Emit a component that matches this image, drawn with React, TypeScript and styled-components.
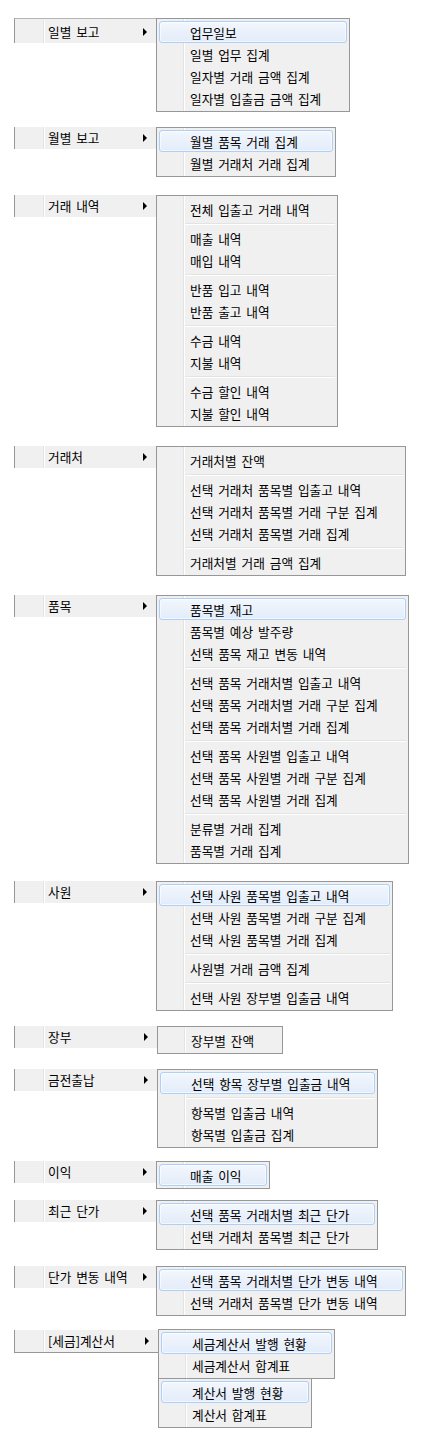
import styled, { createGlobalStyle, css } from "styled-components";

type Entry = string | null;

type Menu = {
  width: number;
  hot?: boolean;
  items: Entry[];
};

type Group = {
  label: string;
  gap: number;
  shift?: number;
  edge?: "top" | "bottom";
  menus: Menu[];
};

const groups: Group[] = [
  {
    label: "일별 보고",
    gap: 18,
    edge: "top",
    menus: [
      {
        width: 194,
        hot: true,
        items: ["업무일보", "일별 업무 집계", "일자별 거래 금액 집계", "일자별 입출금 금액 집계"],
      },
    ],
  },
  {
    label: "월별 보고",
    gap: 15,
    menus: [{ width: 180, hot: true, items: ["월별 품목 거래 집계", "월별 거래처 거래 집계"] }],
  },
  {
    label: "거래 내역",
    gap: 18,
    menus: [
      {
        width: 182,
        items: [
          "전체 입출고 거래 내역",
          null,
          "매출 내역",
          "매입 내역",
          null,
          "반품 입고 내역",
          "반품 출고 내역",
          null,
          "수금 내역",
          "지불 내역",
          null,
          "수금 할인 내역",
          "지불 할인 내역",
        ],
      },
    ],
  },
  {
    label: "거래처",
    gap: 19,
    menus: [
      {
        width: 250,
        items: [
          "거래처별 잔액",
          null,
          "선택 거래처 품목별 입출고 내역",
          "선택 거래처 품목별 거래 구분 집계",
          "선택 거래처 품목별 거래 집계",
          null,
          "거래처별 거래 금액 집계",
        ],
      },
    ],
  },
  {
    label: "품목",
    gap: 19,
    menus: [
      {
        width: 253,
        hot: true,
        items: [
          "품목별 재고",
          "품목별 예상 발주량",
          "선택 품목 재고 변동 내역",
          null,
          "선택 품목 거래처별 입출고 내역",
          "선택 품목 거래처별 거래 구분 집계",
          "선택 품목 거래처별 거래 집계",
          null,
          "선택 품목 사원별 입출고 내역",
          "선택 품목 사원별 거래 구분 집계",
          "선택 품목 사원별 거래 집계",
          null,
          "분류별 거래 집계",
          "품목별 거래 집계",
        ],
      },
    ],
  },
  {
    label: "사원",
    gap: 17,
    menus: [
      {
        width: 237,
        hot: true,
        items: [
          "선택 사원 품목별 입출고 내역",
          "선택 사원 품목별 거래 구분 집계",
          "선택 사원 품목별 거래 집계",
          null,
          "사원별 거래 금액 집계",
          null,
          "선택 사원 장부별 입출금 내역",
        ],
      },
    ],
  },
  {
    label: "장부",
    gap: 15,
    shift: 1,
    menus: [{ width: 126, items: ["장부별 잔액"] }],
  },
  {
    label: "금전출납",
    gap: 15,
    shift: 1,
    menus: [
      {
        width: 221,
        hot: true,
        items: ["선택 항목 장부별 입출금 내역", null, "항목별 입출금 내역", "항목별 입출금 집계"],
      },
    ],
  },
  {
    label: "이익",
    gap: 13,
    menus: [{ width: 114, hot: true, items: ["매출 이익"] }],
  },
  {
    label: "최근 단가",
    gap: 11,
    menus: [
      {
        width: 222,
        hot: true,
        items: ["선택 품목 거래처별 최근 단가", "선택 거래처 품목별 최근 단가"],
      },
    ],
  },
  {
    label: "단가 변동 내역",
    gap: 16,
    menus: [
      {
        width: 250,
        hot: true,
        items: ["선택 품목 거래처별 단가 변동 내역", "선택 거래처 품목별 단가 변동 내역"],
      },
    ],
  },
  {
    label: "[세금]계산서",
    gap: 13,
    shift: 2,
    edge: "bottom",
    menus: [
      { width: 177, hot: true, items: ["세금계산서 발행 현황", "세금계산서 합계표"] },
      { width: 154, hot: true, items: ["계산서 발행 현황", "계산서 합계표"] },
    ],
  },
];

const GlobalStyle = createGlobalStyle`
  html, body {
    margin: 0;
    padding: 0;
    background: #ffffff;
  }
  body {
    font-family: "Noto Sans CJK KR", "Noto Sans", sans-serif;
    font-size: 12.7px;
    word-spacing: 2px;
    color: #000000;
  }
`;

const Page = styled.div`
  width: 428px;
  height: 1448px;
  box-sizing: border-box;
  padding-left: 14px;
  display: flex;
  flex-direction: column;
`;

const Block = styled.div<{ $gap: number }>`
  display: flex;
  align-items: flex-start;
  margin-top: ${(p) => p.$gap}px;
`;

const Parent = styled.div<{ $width: number; $edge?: "top" | "bottom" }>`
  width: ${(p) => p.$width}px;
  height: 22px;
  box-sizing: content-box;
  display: flex;
  align-items: center;
  background: #f0f0f0;
  border-left: 1px solid #979797;
  ${(p) =>
    p.$edge === "top" &&
    css`
      border-top: 1px solid #b4b4b4;
      padding-top: 2px;
    `}
  ${(p) =>
    p.$edge === "bottom" &&
    css`
      margin-top: 1px;
      border-bottom: 1px solid #979797;
    `}
`;

const Gutter = styled.span`
  width: 28px;
  align-self: stretch;
  flex: none;
  border-right: 1px solid #e2e3e3;
  box-shadow: 1px 0 0 #ffffff;
`;

const Label = styled.span`
  flex: 1;
  padding-left: 4px;
  white-space: nowrap;
  line-height: 22px;
`;

const Arrow = styled.span`
  width: 0;
  height: 0;
  margin-right: 9px;
  border-left: 4px solid #000000;
  border-top: 4px solid transparent;
  border-bottom: 4px solid transparent;
`;

const Stack = styled.div`
  display: flex;
  flex-direction: column;
  align-items: flex-start;
  > * + * {
    margin-top: -1px;
  }
`;

const Box = styled.div<{ $width: number }>`
  width: ${(p) => p.$width}px;
  box-sizing: border-box;
  padding: 2px;
  border: 1px solid #979797;
  background: linear-gradient(
      to right,
      transparent 26px,
      #e2e3e3 26px,
      #e2e3e3 27px,
      #ffffff 27px,
      #ffffff 28px,
      transparent 28px
    ),
    #f0f0f0;
  display: flex;
  flex-direction: column;
`;

const Item = styled.div<{ $hot?: boolean }>`
  height: 22px;
  box-sizing: border-box;
  display: flex;
  align-items: center;
  white-space: nowrap;
  border: 1px solid transparent;
  border-radius: 3px;
  padding-left: 30px;
  ${(p) =>
    p.$hot &&
    css`
      border-color: #aecff7;
      background: linear-gradient(to bottom, #f3f7fd 0%, #eaf1fb 50%, #e2ecf9 100%);
      box-shadow: inset 0 0 0 1px rgba(255, 255, 255, 0.6);
    `}
`;

const Separator = styled.div`
  height: 7px;
  display: flex;
  align-items: center;
  &::after {
    content: "";
    flex: 1;
    margin-left: 26px;
    height: 1px;
    background: #e2e3e3;
    border-bottom: 1px solid #ffffff;
  }
`;

function MenuBox({ menu }: { menu: Menu }) {
  return (
    <Box $width={menu.width}>
      {menu.items.map((entry, i) =>
        entry === null ? (
          <Separator key={i} />
        ) : (
          <Item key={i} $hot={menu.hot && i === 0}>
            {entry}
          </Item>
        )
      )}
    </Box>
  );
}

export default function App() {
  return (
    <>
      <GlobalStyle />
      <Page>
        {groups.map((g) => (
          <Block key={g.label} $gap={g.gap}>
            <Parent $width={141 + (g.shift ?? 0)} $edge={g.edge}>
              <Gutter />
              <Label>{g.label}</Label>
              <Arrow />
            </Parent>
            <Stack>
              {g.menus.map((m, i) => (
                <MenuBox key={i} menu={m} />
              ))}
            </Stack>
          </Block>
        ))}
      </Page>
    </>
  );
}
